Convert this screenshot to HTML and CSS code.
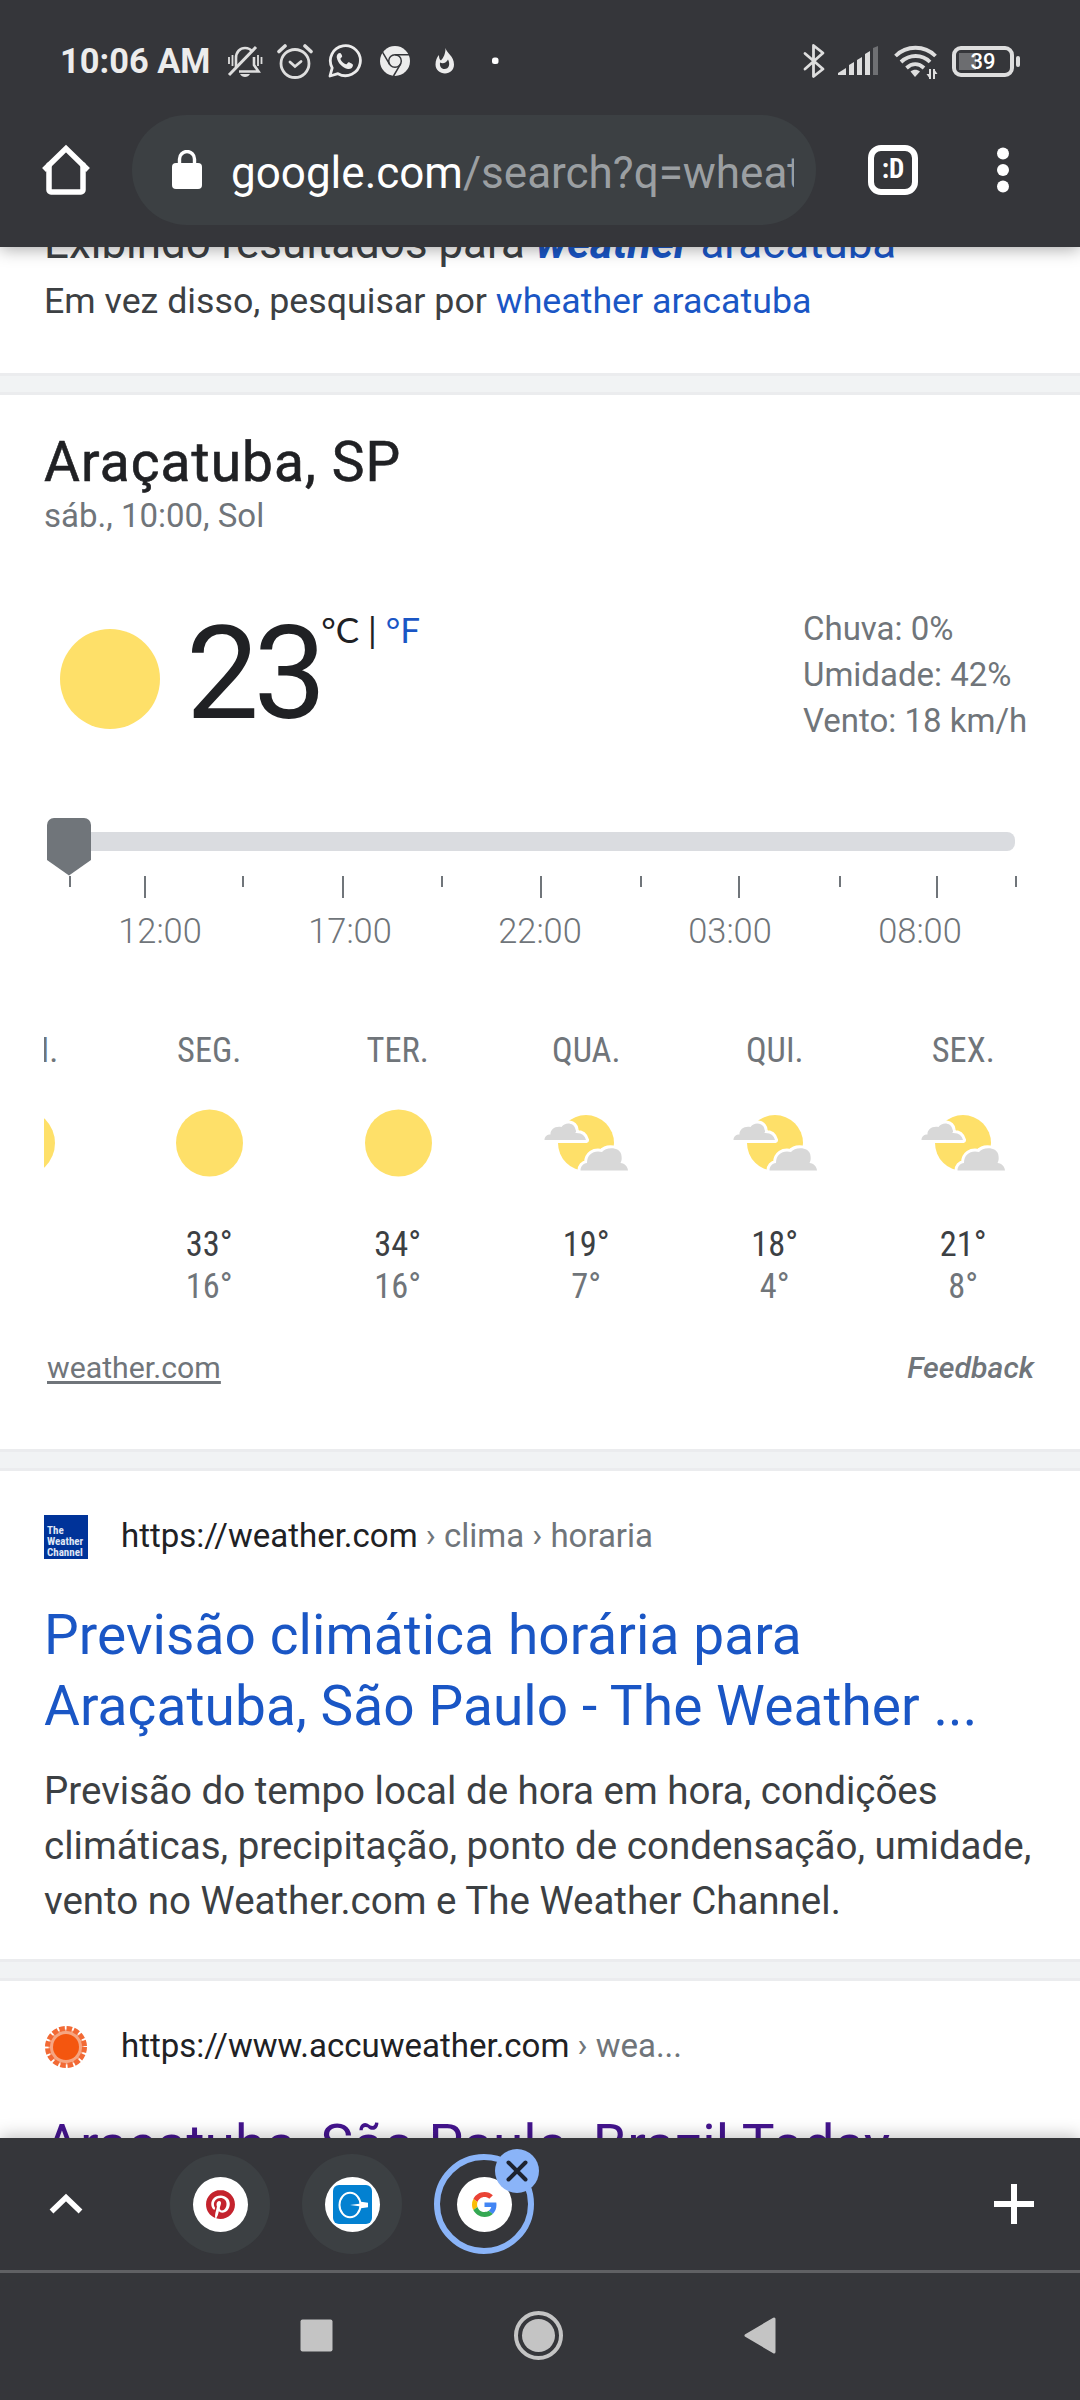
FILE: index.html
```html
<!DOCTYPE html>
<html lang="pt-BR">
<head>
  <meta charset="UTF-8" />
  <meta name="viewport" content="width=device-width, initial-scale=1.0" />
  <title>wheather aracatuba - Pesquisa Google</title>
  <link rel="stylesheet" href="styles.css">
</head>
<body>
<div class="screen">

  <header class="top">
    <div class="status">
      <span class="clock">10:06 AM</span>
      <div class="status-left">
        <!-- muted bell -->
        <svg width="36" height="36" viewBox="0 0 36 36" fill="none" stroke="#dedede" stroke-width="2.6">
          <path d="M9 24V15c0-6 4-10 9-10 4 0 6 1.500 7.500 4M27 14v8l4.500 6.500H12"/>
          <path d="M2 32L29 4" stroke-width="3"/>
          <path d="M2 14v7M5.500 12v11M31 12v11M34.500 14v7" stroke-width="1.800"/>
          <path d="M13 31h10c-1 2-3 3-5 3s-4-1-5-3z" fill="#dedede" stroke="none"/>
        </svg>
        <!-- alarm -->
        <svg width="36" height="36" viewBox="0 0 36 36" fill="none" stroke="#dedede" stroke-width="2.800" stroke-linecap="round">
          <circle cx="18" cy="20.500" r="14"/>
          <path d="M13 19l5 4.500 6-5"/>
          <path d="M2 8.500l6-5.500M34 8.500l-6-5.500" stroke-width="3.600"/>
        </svg>
        <!-- whatsapp -->
        <svg width="36" height="36" viewBox="0 0 36 36">
          <path d="M3 33l2.200-8.200A15 15 0 1 1 11 30.700z" fill="none" stroke="#ececec" stroke-width="2.800" stroke-linejoin="round"/>
          <path d="M13 10c-2 0-3.500 2-3.300 4.300C10.500 20 15.500 25 21 26c2.800.3 5-1.500 5-4 0-.8-4-3-4.800-2.600-.9.500-1.500 2-2.300 1.900-2.200-.7-4.700-3-5.500-5.300 0-.8 1.600-1.600 1.800-2.400.1-.8-1.200-3.600-2.200-3.600z" fill="#ececec"/>
        </svg>
        <!-- chrome -->
        <svg width="36" height="36" viewBox="0 0 36 36">
          <circle cx="18" cy="18" r="15" fill="#ececec"/>
          <circle cx="18" cy="18" r="6.300" fill="#ececec" stroke="#35363a" stroke-width="1.500"/>
          <path d="M18 11.700H32M12.500 21.200L5.500 9.200M23.500 21.200L16.500 33" stroke="#35363a" stroke-width="1.500"/>
        </svg>
        <!-- flame -->
        <svg width="36" height="36" viewBox="0 0 36 36">
          <path d="M18.500 5c1 5 8.500 8 8.500 16.500C27 27 23 30.500 18 30.500S8.500 27 8.500 21.500c0-4 1.500-7.500 3.500-9.500 0 3 .5 4.500 2 5.500 2.500-3 4.500-6.500 4.500-12.500z" fill="#ececec"/>
          <path d="M13 19.500c3 2 6.500 0 8-3 2.500 4.500 1 9.500-3.500 9.500-3.200 0-5-2.500-4.500-6.500z" fill="#35363a"/>
        </svg>
        <svg width="36" height="36" viewBox="0 0 36 36"><rect x="15" y="14.500" width="6.500" height="6.500" rx="2.500" fill="#fff"/></svg>
      </div>
      <div class="status-right">
        <!-- bluetooth -->
        <svg width="24" height="36" viewBox="0 0 24 36" fill="none" stroke="#dedede" stroke-width="2.800" stroke-linejoin="round" stroke-linecap="round">
          <path d="M3 10.500l18 15.500-9.500 7.500V2.500L21 10 3 26"/>
        </svg>
        <!-- signal -->
        <svg width="40" height="36" viewBox="0 0 40 36" fill="#dedede">
          <path d="M0 32v-2l8-5v7z"/>
          <path d="M11 32V22l5-3v13zM19 32V17l5-3v18zM27 32V11l5-3v24z"/>
          <path d="M35 32V5l5-2v29z" fill="#6f7073"/>
        </svg>
        <!-- wifi -->
        <svg width="44" height="36" viewBox="0 0 44 36" fill="none" stroke="#dedede" stroke-width="3.800">
          <path d="M1.500 13c11-11 29-11 40 0M7 19c8.500-8 21-8 29 0M12.500 25c5.500-5 12-5 17.500 0"/>
          <path d="M16.500 28.500c3-2.500 6.500-2.500 9.500 0L21 34z" fill="#dedede" stroke="none"/>
          <path d="M36 26v10M40 26v10" stroke-width="2"/>
          <path d="M32.500 31l3.500 5v-5zM43.500 31L40 26v5z" fill="#dedede" stroke="none"/>
        </svg>
        <div class="battery"><span>39</span></div>
      </div>
    </div>

    <div class="toolbar">
      <svg class="home" width="52" height="52" viewBox="0 0 52 52" fill="none" stroke="#fff" stroke-width="5.500" stroke-linejoin="round" stroke-linecap="round">
        <path d="M9 21v25a2 2 0 0 0 2 2h30a2 2 0 0 0 2-2V21"/>
        <path d="M4 26L26 4.500 48 26" stroke-linecap="butt" stroke-linejoin="miter"/>
      </svg>
      <div class="omnibox">
        <svg width="30" height="40" viewBox="0 0 30 40">
          <rect y="13" width="30" height="26" rx="4" fill="#fff"/>
          <path d="M7.500 15V9a7.500 7.500 0 0 1 15 0v6" fill="none" stroke="#fff" stroke-width="3.400"/>
        </svg>
        <span class="url">google.com<span class="path">/search?q=wheat</span></span>
      </div>
      <div class="tabs">:D</div>
      <svg class="menu" width="12" height="46" viewBox="0 0 12 46" fill="#fff">
        <circle cx="6" cy="6.500" r="6"/><circle cx="6" cy="23" r="6"/><circle cx="6" cy="39.500" r="6"/>
      </svg>
    </div>
  </header>

  <main class="page">
    <section class="card spelling">
      <p class="showing">Exibindo resultados para <a><b><i>weather</i></b> aracatuba</a></p>
      <p class="instead">Em vez disso, pesquisar por <a>wheather aracatuba</a></p>
    </section>

    <section class="card weather">
      <h1>Araçatuba, SP</h1>
      <p class="when">sáb., 10:00, Sol</p>

      <div class="current">
        <div class="big-sun"></div>
        <div class="temp">23</div>
        <div class="units"><span>°C</span><span class="bar">|</span><a>°F</a></div>
        <div class="details">
          <div>Chuva: 0%</div>
          <div>Umidade: 42%</div>
          <div>Vento: 18 km/h</div>
        </div>
      </div>

      <svg class="slider" width="992" height="80" viewBox="0 0 992 80">
        <rect x="3" y="14" width="968" height="19" rx="8" fill="#dadce0"/>
        <path d="M10 0h30a7 7 0 0 1 7 7v35L25 57.500 3 42V7a7 7 0 0 1 7-7z" fill="#70757a"/>
        <path d="M26 58v11M199 58v11M398 58v11M597 58v11M796 58v11M972 58v11" stroke="#70757a" stroke-width="2"/>
        <path d="M101 58v22M299 58v22M497 58v22M695 58v22M893 58v22" stroke="#70757a" stroke-width="2"/>
      </svg>
      <div class="hours">
        <span>12:00</span><span>17:00</span><span>22:00</span><span>03:00</span><span>08:00</span>
      </div>

      <svg class="defs" width="0" height="0">
        <symbol id="sunny" viewBox="0 0 84 84"><circle cx="42.500" cy="42" r="33.500" fill="#fee069"/></symbol>
        <symbol id="partly" viewBox="0 0 84 84">
          <circle cx="42" cy="42" r="28" fill="#fee069"/>
          <g fill="#d8d8d8" stroke="#fff" stroke-width="6" stroke-linejoin="round" paint-order="stroke">
            <path d="M.5 39c0-3.500 2.500-5.500 6-5.500-.5-5 5-9 11-7.500 3.500-5.500 13-4.500 14 2.500 1 2 .5 3-.5 3.500 7-.5 10 3 11 7z"/>
            <path d="M36.500 69.500c0-4 2.500-7 6.500-7.500 0-9 7-13 15-11 4-5.500 19-5.500 19.500 4 .5 3 0 5-1 7 4.500.5 7 3.500 7.500 7.500z"/>
          </g>
        </symbol>
      </svg>
      <div class="days">
        <div class="day"><h3>DOM.</h3><svg><use href="#sunny"/></svg></div>
        <div class="day"><h3>SEG.</h3><svg><use href="#sunny"/></svg><b>33°</b><span>16°</span></div>
        <div class="day"><h3>TER.</h3><svg><use href="#sunny"/></svg><b>34°</b><span>16°</span></div>
        <div class="day"><h3>QUA.</h3><svg><use href="#partly"/></svg><b>19°</b><span>7°</span></div>
        <div class="day"><h3>QUI.</h3><svg><use href="#partly"/></svg><b>18°</b><span>4°</span></div>
        <div class="day"><h3>SEX.</h3><svg><use href="#partly"/></svg><b>21°</b><span>8°</span></div>
      </div>

      <div class="source"><a>weather.com</a><i>Feedback</i></div>
    </section>

    <section class="card result">
      <div class="site">
        <div class="twc">The<br>Weather<br>Channel</div>
        <cite>https://weather.com <span>› clima › horaria</span></cite>
      </div>
      <h2>Previsão climática horária para<br>Araçatuba, São Paulo - The Weather ...</h2>
      <p>Previsão do tempo local de hora em hora, condições climáticas, precipitação, ponto de condensação, umidade, vento no Weather.com e The Weather Channel.</p>
    </section>

    <section class="card result">
      <div class="site">
        <svg class="accu" width="44" height="44" viewBox="-22 -22 44 44">
          <circle r="17.500" fill="#f6a581"/>
          <circle r="18.500" fill="none" stroke="#f26a35" stroke-width="5" stroke-dasharray="5.500 1.765"/>
          <circle r="15" fill="#f6a581"/>
          <circle r="13" fill="#f4560f"/>
        </svg>
        <cite>https://www.accuweather.com <span>› wea...</span></cite>
      </div>
      <h2 class="visited">Araçatuba, São Paulo, Brazil Today</h2>
    </section>
  </main>

  <footer class="bottom">
    <div class="tab-strip">
      <svg class="chevron" width="34" height="22" viewBox="0 0 34 22" fill="none" stroke="#fff" stroke-width="5.500"><path d="M2.500 18.500L17 4.500l14.500 14"/></svg>
      <div class="tab">
        <div class="fav"><svg width="29" height="29" viewBox="0 0 24 24"><path fill="#c4232d" d="M12.017 0C5.396 0 .029 5.367.029 11.987c0 5.079 3.158 9.417 7.618 11.162-.105-.949-.199-2.403.041-3.439.219-.937 1.406-5.957 1.406-5.957s-.359-.72-.359-1.781c0-1.663.967-2.911 2.168-2.911 1.024 0 1.518.769 1.518 1.688 0 1.029-.653 2.567-.992 3.992-.285 1.193.6 2.165 1.775 2.165 2.128 0 3.768-2.245 3.768-5.487 0-2.861-2.063-4.869-5.008-4.869-3.41 0-5.409 2.562-5.409 5.199 0 1.033.394 2.143.889 2.741.099.12.112.225.085.345-.09.375-.293 1.199-.334 1.363-.053.225-.172.271-.401.165-1.495-.69-2.433-2.878-2.433-4.646 0-3.776 2.748-7.252 7.92-7.252 4.158 0 7.392 2.967 7.392 6.923 0 4.135-2.607 7.462-6.233 7.462-1.214 0-2.354-.629-2.758-1.379l-.749 2.848c-.269 1.045-1.004 2.352-1.498 3.146 1.123.345 2.306.535 3.55.535 6.607 0 11.985-5.365 11.985-11.987C23.97 5.39 18.592.026 11.985.026L12.017 0z"/></svg></div>
      </div>
      <div class="tab">
        <div class="fav"><svg width="39" height="39" viewBox="0 0 39 39">
          <rect width="39" height="39" rx="6" fill="#0381d1"/>
          <ellipse cx="17" cy="20" rx="10.500" ry="12.300" fill="none" stroke="#fff" stroke-width="2"/>
          <path d="M17 20l11-1.500v-1.700l7 1v4.400l-7 1v-1.700z" fill="#fff"/>
        </svg></div>
      </div>
      <div class="tab active">
        <div class="fav"><svg width="25" height="25" viewBox="0 0 48 48">
          <path fill="#ea4335" d="M24 9.500c3.540 0 6.710 1.220 9.210 3.600l6.850-6.850C35.900 2.380 30.470 0 24 0 14.620 0 6.510 5.380 2.560 13.220l7.980 6.190C12.430 13.720 17.740 9.500 24 9.500z"/>
          <path fill="#4285f4" d="M46.980 24.550c0-1.570-.15-3.090-.38-4.550H24v9.020h12.940c-.58 2.960-2.260 5.480-4.780 7.180l7.730 6c4.510-4.180 7.090-10.360 7.090-17.650z"/>
          <path fill="#fbbc05" d="M10.530 28.590A14.500 14.500 0 0 1 9.770 24c0-1.600.27-3.140.76-4.590l-7.980-6.190A23.900 23.900 0 0 0 0 24c0 3.880.92 7.540 2.560 10.780z"/>
          <path fill="#34a853" d="M24 48c6.480 0 11.930-2.130 15.890-5.810l-7.730-6c-2.150 1.450-4.920 2.300-8.160 2.300-6.260 0-11.570-4.220-13.470-9.910l-7.980 6.190C6.510 42.620 14.620 48 24 48z"/>
        </svg></div>
        <div class="close"><svg width="22" height="22" viewBox="0 0 22 22" stroke="#1d2330" stroke-width="4" stroke-linecap="round"><path d="M2.500 2.500l17 17M19.500 2.500l-17 17"/></svg></div>
      </div>
      <svg class="plus" width="40" height="40" viewBox="0 0 40 40" stroke="#fff" stroke-width="6"><path d="M20 0v40M0 20h40"/></svg>
    </div>
    <nav class="sysnav">
      <svg width="49" height="49" viewBox="0 0 49 49"><rect x="8.500" y="8.500" width="32" height="32" rx="2" fill="#c4c4c4"/></svg>
      <svg width="49" height="49" viewBox="0 0 49 49"><circle cx="24.500" cy="24.500" r="22.500" fill="none" stroke="#c4c4c4" stroke-width="4"/><circle cx="24.500" cy="24.500" r="16.500" fill="#c4c4c4"/></svg>
      <svg width="49" height="49" viewBox="0 0 49 49"><path d="M38 8v33L10 24.500z" fill="#c4c4c4" stroke="#c4c4c4" stroke-width="3" stroke-linejoin="round"/></svg>
    </nav>
  </footer>

</div>
</body>
</html>
```
FILE: styles.css
```css
* {
  box-sizing: border-box;
}
body {
  margin: 0;
  background: #fff;
  font-family: Roboto, sans-serif;
  color: #3c4043;
}
h1, h2, h3, p {
  margin: 0;
  font-weight: 400;
}
svg {
  display: block;
  flex: none;
}
a {
  color: #1a56c5;
}
.screen {
  width: 1080px;
  height: 2400px;
  display: flex;
  flex-direction: column;
  overflow: hidden;
}

/* browser header */
.top {
  height: 247px;
  flex: none;
  background: #35363a;
  z-index: 1;
  box-shadow: 0 2px 16px rgba(0, 0, 0, 0.35);
}
.status {
  height: 115px;
  padding: 38px 60px 31px 60px;
  display: flex;
  align-items: center;
}
.clock {
  width: 167px;
  font-size: 34.400px;
  font-weight: 700;
  color: #ececec;
  white-space: nowrap;
}
.status-left {
  display: flex;
  gap: 14px;
}
.status-right {
  display: flex;
  align-items: center;
  margin-left: auto;
}
.status-right svg:nth-child(2) {
  margin-left: 12px;
}
.status-right svg:nth-child(3) {
  margin-left: 16px;
}
.battery {
  position: relative;
  width: 62px;
  height: 31px;
  margin: 0 6px 0 14px;
  border: 4px solid #dedede;
  border-radius: 9px;
  background: linear-gradient(#6c6d70, #6c6d70) 3px 3px / 17px 17px no-repeat;
  text-align: center;
}
.battery::after {
  content: "";
  position: absolute;
  right: -10px;
  top: 6px;
  width: 4px;
  height: 11px;
  border-radius: 2px;
  background: #dedede;
}
.battery span {
  display: block;
  font-size: 22px;
  line-height: 24px;
  font-weight: 500;
  color: #fff;
}
.toolbar {
  display: flex;
  align-items: center;
  padding-left: 40px;
}
.omnibox {
  width: 684px;
  height: 110px;
  margin-left: 40px;
  padding: 0 22px 0 40px;
  border-radius: 55px;
  background: #3c4043;
  display: flex;
  align-items: center;
}
.url {
  margin-left: 29px;
  flex: 1;
  overflow: hidden;
  white-space: nowrap;
  font-size: 44px;
  line-height: 60px;
  padding-top: 5px;
  color: #fff;
}
.path {
  color: #9b9fa2;
}
.tabs {
  width: 50px;
  height: 50px;
  margin-left: 52px;
  border: 6px solid #fff;
  border-radius: 13px;
  color: #fff;
  font: 700 27px/36px "Roboto Condensed", Roboto, sans-serif;
  text-align: center;
}
.menu {
  margin-left: 79px;
}

/* page */
.page {
  flex: 1;
  min-height: 0;
  overflow: hidden;
}
.card {
  padding: 0 44px;
}
.card + .card {
  border-top: 22px solid #f1f3f4;
  position: relative;
}
.card + .card::before {
  content: "";
  position: absolute;
  left: 0;
  right: 0;
  top: -22px;
  height: 16px;
  border: solid #ebecee;
  border-width: 3px 0;
}
.spelling {
  margin-top: -34px;
  padding-bottom: 44px;
}
.showing {
  font-size: 43.900px;
  line-height: 60px;
}
.instead {
  font-size: 35.750px;
  line-height: 56px;
}
.weather {
  padding-top: 35px;
  padding-bottom: 61px;
}
h1 {
  font-size: 55px;
  line-height: 64px;
  letter-spacing: 1.100px;
  color: #202124;
  -webkit-text-stroke: 0.600px #202124;
}
.when {
  font-size: 33px;
  line-height: 44px;
  color: #70757a;
}
.current {
  display: flex;
  align-items: flex-start;
  height: 138px;
  margin-top: 68px;
}
.big-sun {
  width: 100px;
  height: 100px;
  margin: 23px 0 0 16px;
  border-radius: 50%;
  background: #fee069;
}
.temp {
  margin-left: 26px;
  font-size: 130px;
  line-height: 135px;
  letter-spacing: -5.500px;
  color: #202124;
}
.units {
  display: flex;
  font-family: Lato, sans-serif;
  font-size: 35px;
  line-height: 46px;
  color: #202124;
}
.bar {
  margin: 0 9px;
}
.details {
  width: 233px;
  margin-left: auto;
  font-size: 33px;
  line-height: 46px;
  color: #70757a;
  white-space: nowrap;
}
.slider {
  margin-top: 74px;
}
.hours {
  display: flex;
  margin-top: 11px;
  padding-left: 21px;
}
.hours span {
  width: 190px;
  flex: none;
  text-align: center;
  font-size: 34.400px;
  font-weight: 300;
  line-height: 44px;
  color: #70757a;
}
.defs {
  position: absolute;
}
.days {
  display: flex;
  margin-top: 75px;
  overflow: hidden;
}
.day {
  width: 188.500px;
  flex: none;
  display: flex;
  flex-direction: column;
  align-items: center;
  font-family: "Roboto Condensed", Roboto, sans-serif;
  font-size: 34.400px;
  line-height: 42px;
  color: #70757a;
}
.day:first-child {
  margin-left: -117.500px;
}
.day h3 {
  font-size: 34.400px;
  line-height: 44px;
}
.day svg {
  width: 84px;
  height: 84px;
  margin: 29px 0 38px;
}
.day b {
  font-weight: 400;
  color: #3c4043;
}
.source {
  display: flex;
  justify-content: space-between;
  margin-top: 41px;
  padding: 0 2px 0 3px;
  font-size: 30.250px;
  line-height: 40px;
  color: #70757a;
}
.source a {
  color: #70757a;
  text-decoration: underline;
  text-decoration-thickness: 3px;
  text-underline-offset: 3px;
}
.source i {
  font-weight: 500;
}
.result {
  padding-top: 44px;
  padding-bottom: 31px;
}
.site {
  display: flex;
  align-items: center;
  height: 44px;
}
.twc {
  width: 44px;
  height: 44px;
  padding: 10px 0 0 3px;
  background: #003399;
  color: #dfe5f5;
  font: 700 11px/11px "Roboto Condensed", Roboto, sans-serif;
}
cite {
  margin: -2px 0 0 33px;
  font-size: 33px;
  line-height: 44px;
  font-style: normal;
  color: #202124;
}
cite span {
  color: #70757a;
}
h2 {
  margin-top: 41px;
  font-size: 55px;
  line-height: 71px;
  letter-spacing: 0.080px;
  color: #1a56c5;
  white-space: nowrap;
}
.visited {
  color: #44148e;
}
.result p {
  margin-top: 21px;
  font-size: 38.500px;
  line-height: 55px;
}

/* tab strip and system buttons */
.bottom {
  height: 262px;
  flex: none;
  background: #35363a;
  z-index: 1;
  box-shadow: 0 -2px 16px rgba(0, 0, 0, 0.25);
}
.tab-strip {
  display: flex;
  align-items: center;
  height: 135px;
  padding: 0 46px 0 49px;
  border-bottom: 3px solid #606164;
}
.tab {
  position: relative;
  width: 100px;
  height: 100px;
  margin-right: 32px;
  border-radius: 50%;
  background: #3c4043;
  display: flex;
  align-items: center;
  justify-content: center;
}
.chevron {
  margin-right: 87px;
}
.active {
  background: none;
  border: 6px solid #8ab4f8;
}
.fav {
  width: 55px;
  height: 55px;
  border-radius: 50%;
  background: #fff;
  display: flex;
  align-items: center;
  justify-content: center;
}
.close {
  position: absolute;
  top: -11px;
  right: -11px;
  width: 44px;
  height: 44px;
  border-radius: 50%;
  background: #8ab4f8;
  display: flex;
  align-items: center;
  justify-content: center;
}
.plus {
  margin-left: auto;
}
.sysnav {
  display: flex;
  justify-content: center;
  gap: 173px;
  padding: 38px 3px 0 0;
}
```
